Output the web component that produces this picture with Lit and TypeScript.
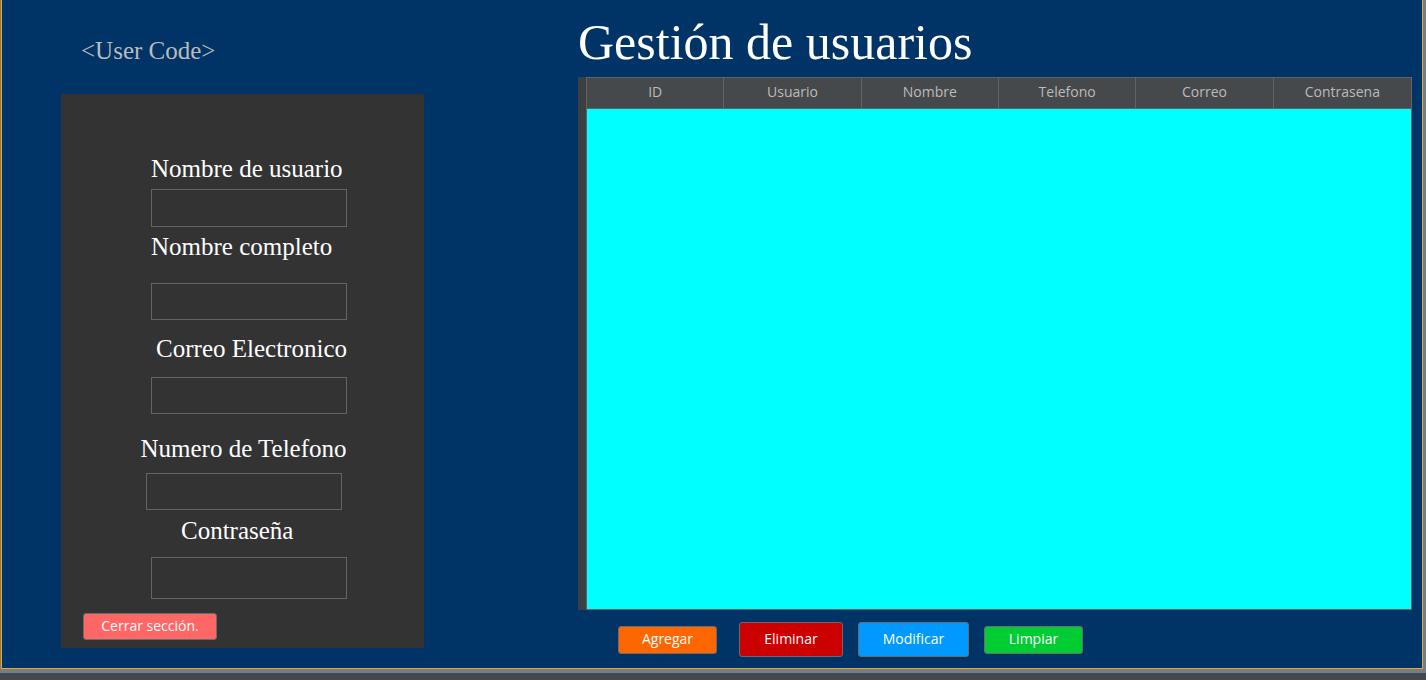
import { LitElement, html, css } from "lit";
import { customElement } from "lit/decorators.js";

const COLUMNS = ["ID", "Usuario", "Nombre", "Telefono", "Correo", "Contrasena"];

@customElement("user-form")
class UserForm extends LitElement {
  static styles = css`
    :host {
      display: block;
      font: 25px/28px "Liberation Serif", serif;
      color: #fff;
    }
    .code {
      margin: 0;
      padding: 37px 0 29px 20px;
      color: #bbb;
    }
    .card {
      background: #333;
      padding: 61px 22px 8px;
    }
    .fields {
      display: flex;
      flex-direction: column;
      align-items: flex-end;
      width: 207px;
      margin-left: 57px;
    }
    .field {
      display: flex;
      flex-direction: column;
      width: 196px;
    }
    .wide {
      width: 100%;
      align-items: center;
    }
    .end {
      align-items: flex-end;
    }
    label {
      white-space: nowrap;
    }
    input {
      box-sizing: border-box;
      width: 196px;
      height: 37px;
      border: 1px solid #646464;
      border-radius: 0;
      padding: 0 6px;
      background: transparent;
      color: #fff;
      font: 14px/20px "Open Sans", sans-serif;
    }
    .user { gap: 6px; }
    .user input { height: 38px; }
    .name { gap: 22px; margin-top: 6px; }
    .mail { gap: 14px; margin-top: 15px; }
    .phone { gap: 10px; margin-top: 21px; }
    .pass { gap: 12px; margin-top: 7px; }
    .pass input { height: 42px; }
    .pass label { padding-left: 30px; }
    .logout {
      display: block;
      box-sizing: border-box;
      width: 134px;
      height: 27px;
      margin-top: 14px;
      padding: 0 0 1px;
      border: 1px solid #6b6b6b;
      border-radius: 3px;
      background: #ff6666;
      color: #fff;
      font: 14px/20px "Open Sans", sans-serif;
    }
  `;

  render() {
    return html`
      <p class="code">&lt;User Code&gt;</p>
      <form class="card" @submit=${(e: Event) => e.preventDefault()}>
        <div class="fields">
          <div class="field user">
            <label for="user">Nombre de usuario</label>
            <input id="user" type="text" />
          </div>
          <div class="field name">
            <label for="name">Nombre completo</label>
            <input id="name" type="text" />
          </div>
          <div class="field end mail">
            <label for="mail">Correo Electronico</label>
            <input id="mail" type="email" />
          </div>
          <div class="field wide phone">
            <label for="phone">Numero de Telefono</label>
            <input id="phone" type="tel" />
          </div>
          <div class="field pass">
            <label for="pass">Contraseña</label>
            <input id="pass" type="password" />
          </div>
        </div>
        <button class="logout" type="button">Cerrar sección.</button>
      </form>
    `;
  }
}

@customElement("user-table")
class UserTable extends LitElement {
  static styles = css`
    :host {
      display: flex;
      flex-direction: column;
      background: #3c3f41;
      padding-left: 8px;
    }
    .pane {
      flex: 1;
      border: 1px solid #646464;
      border-top: 0;
      background: #00ffff;
    }
    table {
      width: 100%;
      table-layout: fixed;
      border-collapse: separate;
      border-spacing: 0;
    }
    th {
      box-sizing: border-box;
      height: 32px;
      padding: 0 0 2px;
      border: 1px solid #616365;
      border-left: 0;
      background: #46494b;
      color: #bbb;
      font: 14px/20px "Open Sans", sans-serif;
    }
    th:last-child {
      border-right: 0;
    }
  `;

  render() {
    return html`
      <div class="pane">
        <table>
          <thead>
            <tr>${COLUMNS.map((c) => html`<th scope="col">${c}</th>`)}</tr>
          </thead>
          <tbody></tbody>
        </table>
      </div>
    `;
  }
}

@customElement("app-root")
class AppRoot extends LitElement {
  static styles = css`
    :host {
      display: block;
      box-sizing: border-box;
      min-height: 100vh;
      padding-bottom: 7px;
      background: #46494b;
    }
    .frame {
      box-sizing: border-box;
      min-height: calc(100vh - 7px);
      display: flex;
      padding: 0 3px 4px 1px;
      background: #6b7f96;
    }
    .window {
      flex: 1;
      display: grid;
      grid-template-columns: 363px minmax(0, 1fr);
      column-gap: 154px;
      padding: 0 10px 0 59px;
      border: 1px solid #ffa500;
      border-top: 0;
      background: #003366;
    }
    .main {
      display: flex;
      flex-direction: column;
    }
    h1 {
      margin: 0;
      padding: 14px 0 7px;
      color: #fff;
      font: 50px/56px "Liberation Serif", serif;
    }
    user-table {
      flex: 1;
    }
    .actions {
      display: flex;
      align-items: center;
      gap: 15px;
      padding: 12px 0 11px 40px;
    }
    .btn {
      box-sizing: border-box;
      width: 99px;
      height: 28px;
      padding: 0 0 2px;
      border: 1px solid #6b6b6b;
      border-radius: 3px;
      color: #fff;
      font: 14px/20px "Open Sans", sans-serif;
    }
    .tall {
      height: 35px;
    }
    .add { background: #ff6600; margin-right: 7px; }
    .remove { background: #cc0000; width: 104px; }
    .edit { background: #0099ff; width: 111px; }
    .clear { background: #00cc33; }
  `;

  render() {
    return html`
      <div class="frame">
        <div class="window">
          <user-form></user-form>
          <main class="main">
            <h1>Gestión de usuarios</h1>
            <user-table></user-table>
            <div class="actions">
              <button class="btn add" type="button">Agregar</button>
              <button class="btn tall remove" type="button">Eliminar</button>
              <button class="btn tall edit" type="button">Modificar</button>
              <button class="btn clear" type="button">Limpiar</button>
            </div>
          </main>
        </div>
      </div>
    `;
  }
}
